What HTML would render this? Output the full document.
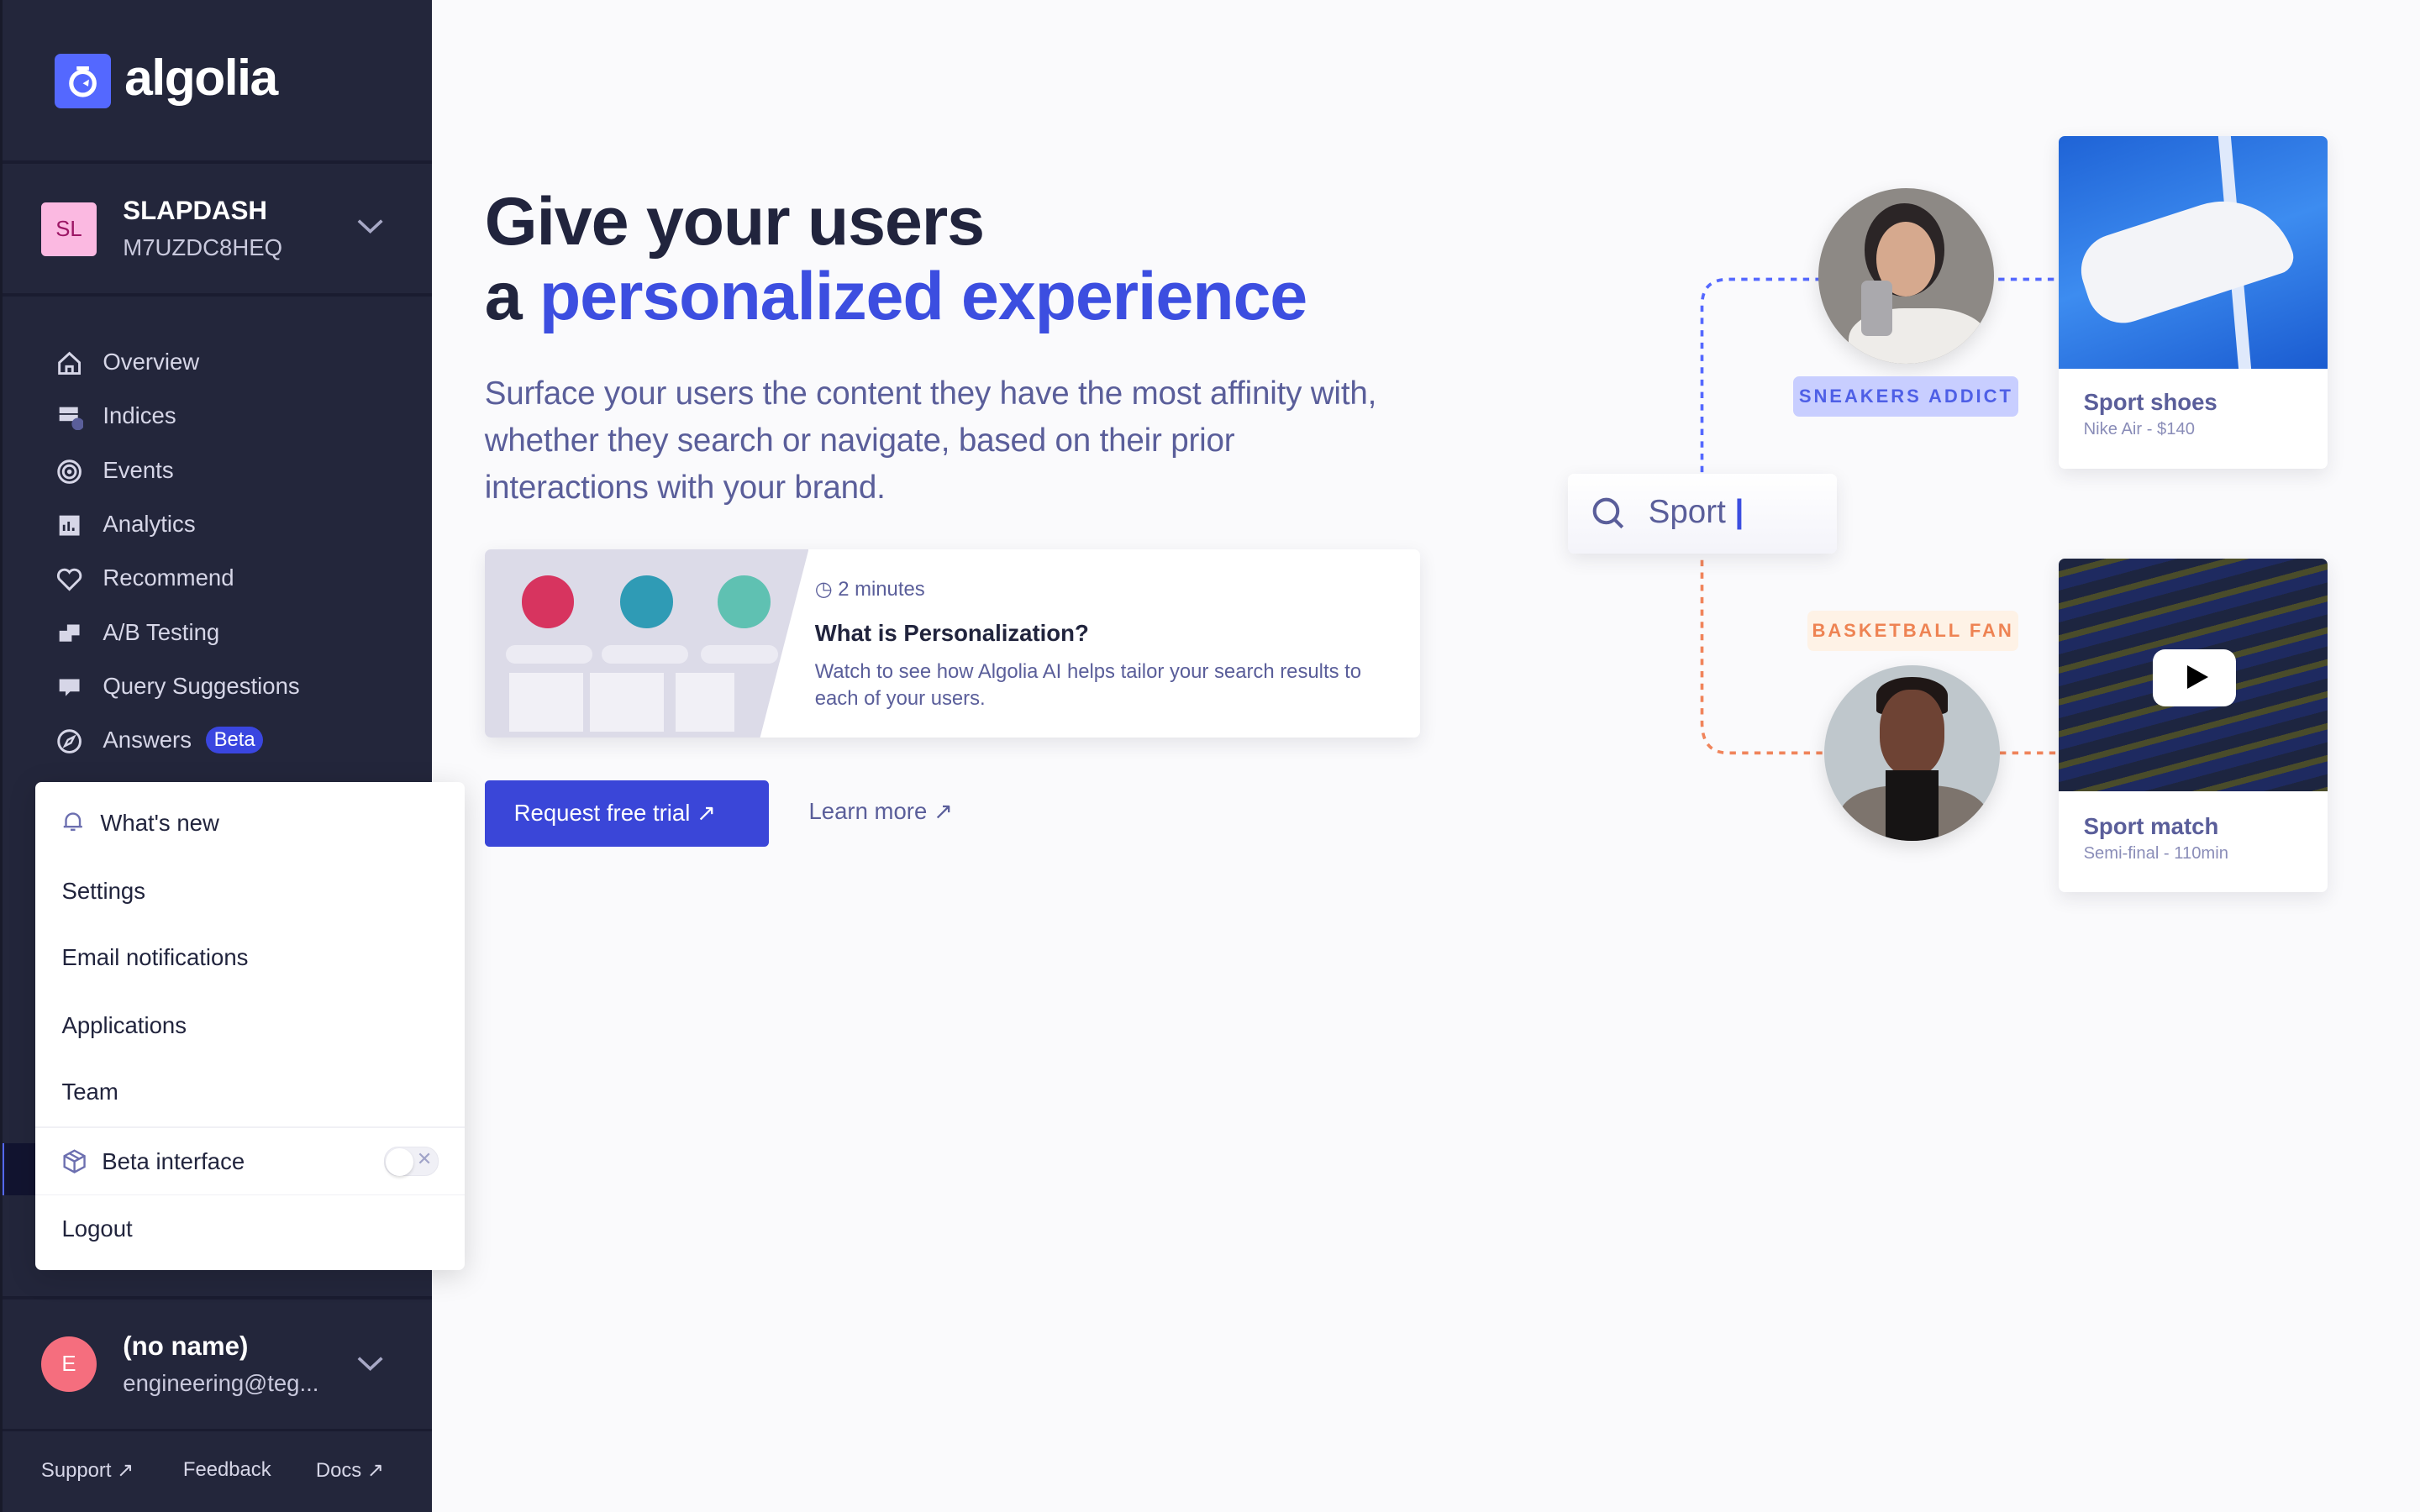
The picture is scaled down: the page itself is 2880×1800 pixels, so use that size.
<!DOCTYPE html>
<html><head><meta charset="utf-8"><style>
html,body{margin:0;padding:0}
body{width:1568px;height:980px;zoom:1.83673;background:#fafafc;font-family:"Liberation Sans",sans-serif;position:relative;overflow:hidden}
.abs{position:absolute}
#sb{left:0;top:0;width:280px;height:980px;background:#23263b;border-left:2px solid #181a2a;box-sizing:border-box;overflow:hidden}
.hr{position:absolute;left:0;width:278px;height:2px;background:#1a1c30}
.nav{position:absolute;left:65px;color:#d6d6e7;font-size:15px}
.ic{position:absolute;left:35px;width:17px;height:17px}
.menu{left:23px;top:507px;width:278px;height:316px;background:#fff;border-radius:4px;box-shadow:0 4px 18px rgba(0,0,0,.15)}
.mi{position:absolute;left:17px;font-size:15px;color:#21243d}
h1{margin:0;font-size:44px;line-height:48px;color:#21243d;font-weight:700;letter-spacing:-0.6px}
.card{background:#fff;border-radius:4px;box-shadow:0 4px 12px rgba(35,38,59,.1)}
</style></head><body>
<div id="sb" class="abs">
 <div class="abs" style="left:34px;top:35px;width:36px;height:35px;background:#5468ff;border-radius:4px"></div>
 <svg class="abs" style="left:37px;top:37px" width="30" height="30" viewBox="0 0 30 30"><circle cx="15" cy="17" r="7.5" fill="none" stroke="#fff" stroke-width="2.8"/><rect x="11" y="6" width="8" height="2.5" fill="#fff"/><path d="M15 17 L19 14.5 L18.5 19Z" fill="#fff"/></svg>
 <div class="abs" style="left:79px;top:31px;font-size:33px;color:#fff;font-weight:700;letter-spacing:-0.8px">algolia</div>
 <div class="hr" style="top:104px"></div>
 <div class="abs" style="left:25px;top:131px;width:36px;height:35px;background:#fbb9e1;border-radius:3px;color:#9c1665;font-size:14px;text-align:center;line-height:35px">SL</div>
 <div class="abs" style="left:78px;top:127px;color:#fff;font-size:17px;font-weight:700">SLAPDASH</div>
 <div class="abs" style="left:78px;top:152px;color:#c9c9dd;font-size:15px">M7UZDC8HEQ</div>
 <svg class="abs" style="left:230px;top:141px" width="17" height="12"><path d="M1 2 L8.5 9 L16 2" stroke="#a7a8c6" stroke-width="2" fill="none"/></svg>
 <div class="hr" style="top:190px"></div>
 <svg class="ic" style="top:227px" viewBox="0 0 17 17"><path d="M2 8 L8.5 2 L15 8 V15 H2Z M6.5 15 V10.5 H10.5 V15" fill="none" stroke="#d6d6e7" stroke-width="1.6"/></svg>
 <div class="nav" style="top:226px">Overview</div>
 <svg class="ic" style="top:262px" viewBox="0 0 17 17"><rect x="2" y="2" width="12" height="4" fill="#d6d6e7"/><rect x="2" y="7" width="12" height="4" fill="#d6d6e7"/><circle cx="14" cy="13" r="4" fill="#5a5e9a"/></svg>
 <div class="nav" style="top:261px">Indices</div>
 <svg class="ic" style="top:297px" viewBox="0 0 17 17"><circle cx="8.5" cy="8.5" r="7" fill="none" stroke="#d6d6e7" stroke-width="1.6"/><circle cx="8.5" cy="8.5" r="4" fill="none" stroke="#d6d6e7" stroke-width="1.6"/><circle cx="8.5" cy="8.5" r="1.5" fill="#d6d6e7"/></svg>
 <div class="nav" style="top:296px">Events</div>
 <svg class="ic" style="top:332px" viewBox="0 0 17 17"><rect x="2" y="2" width="13" height="13" fill="#d6d6e7"/><path d="M5 12V8M8 12V6M11 12V10" stroke="#23263b" stroke-width="1.5"/></svg>
 <div class="nav" style="top:331px">Analytics</div>
 <svg class="ic" style="top:367px" viewBox="0 0 17 17"><path d="M8.5 15 L2 8.5 A3.5 3.5 0 0 1 8.5 4 A3.5 3.5 0 0 1 15 8.5Z" fill="none" stroke="#d6d6e7" stroke-width="1.6"/></svg>
 <div class="nav" style="top:366px">Recommend</div>
 <svg class="ic" style="top:402px" viewBox="0 0 17 17"><rect x="2" y="7" width="8" height="7" fill="#d6d6e7"/><rect x="7" y="3" width="8" height="7" fill="#d6d6e7"/></svg>
 <div class="nav" style="top:401px">A/B Testing</div>
 <svg class="ic" style="top:437px" viewBox="0 0 17 17"><path d="M2 3H15V11H9L6 14V11H2Z" fill="#d6d6e7"/></svg>
 <div class="nav" style="top:436px">Query Suggestions</div>
 <svg class="ic" style="top:472px" viewBox="0 0 17 17"><circle cx="8.5" cy="8.5" r="7" fill="none" stroke="#d6d6e7" stroke-width="1.6"/><path d="M11.5 5.5 L9.5 9.5 L5.5 11.5 L7.5 7.5Z" fill="none" stroke="#d6d6e7" stroke-width="1.3"/></svg>
 <div class="nav" style="top:471px">Answers</div>
 <div class="abs" style="left:132px;top:471px;background:#3a46e0;color:#fff;font-size:13px;padding:1px 5px;border-radius:9px">Beta</div>
 <div class="abs" style="left:-2px;top:741px;width:3px;height:34px;background:#5468ff"></div>
 <div class="abs" style="left:1px;top:741px;width:20px;height:34px;background:#121430"></div>
 <div class="hr" style="top:840px"></div>
 <div class="abs" style="left:25px;top:866px;width:36px;height:36px;background:#f56e7e;border-radius:50%;color:#fff;font-size:14px;text-align:center;line-height:36px">E</div>
 <div class="abs" style="left:78px;top:863px;color:#fff;font-size:17px;font-weight:700">(no name)</div>
 <div class="abs" style="left:78px;top:888px;color:#c9c9dd;font-size:15px">engineering@teg...</div>
 <svg class="abs" style="left:230px;top:878px" width="17" height="12"><path d="M1 2 L8.5 9 L16 2" stroke="#a7a8c6" stroke-width="2" fill="none"/></svg>
 <div class="hr" style="top:926px"></div>
 <div class="abs" style="left:25px;top:945px;color:#d6d6e7;font-size:13px">Support ↗</div>
 <div class="abs" style="left:117px;top:945px;color:#d6d6e7;font-size:13px">Feedback</div>
 <div class="abs" style="left:203px;top:945px;color:#d6d6e7;font-size:13px">Docs ↗</div>
</div>
<div class="abs menu">
 <svg class="abs" style="left:17px;top:18px" width="15" height="15" viewBox="0 0 15 15"><path d="M3 11V7A4.5 4.5 0 0 1 12 7V11H3ZM1.5 11H13.5M6 13H9" fill="none" stroke="#6c6fb0" stroke-width="1.3"/></svg>
 <div class="mi" style="left:42px;top:18px">What's new</div>
 <div class="mi" style="top:62px">Settings</div>
 <div class="mi" style="top:105px">Email notifications</div>
 <div class="mi" style="top:149px">Applications</div>
 <div class="mi" style="top:192px">Team</div>
 <div class="abs" style="left:0;top:223px;width:278px;height:1px;background:#f0f0f5"></div>
 <svg class="abs" style="left:17px;top:237px" width="17" height="17" viewBox="0 0 17 17"><path d="M8.5 1.5L15 5V12L8.5 15.5L2 12V5Z M2 5L8.5 8.5L15 5 M8.5 8.5V15.5 M5 3.2L11.5 6.8" fill="none" stroke="#6c6fb0" stroke-width="1.3"/></svg>
 <div class="mi" style="left:43px;top:237px">Beta interface</div>
 <div class="abs" style="left:226px;top:236px;width:34px;height:18px;border-radius:9px;background:#f0f0f6;border:1px solid #e6e6ee"></div>
 <div class="abs" style="left:227px;top:237px;width:18px;height:18px;border-radius:50%;background:#fff;box-shadow:0 1px 2px rgba(0,0,0,.15)"></div>
 <div class="abs" style="left:247px;top:237px;color:#a0a3c8;font-size:12px">✕</div>
 <div class="abs" style="left:0;top:267px;width:278px;height:1px;background:#f0f0f5"></div>
 <div class="mi" style="top:281px">Logout</div>
</div>

<div class="abs" style="left:314px;top:120px"><h1>Give your users</h1><h1>a <span style="color:#3c4ee0">personalized experience</span></h1></div>
<div class="abs" style="left:314px;top:240px;width:585px;font-size:21px;line-height:30.5px;color:#5a5e9a;letter-spacing:-0.1px">Surface your users the content they have the most affinity with, whether they search or navigate, based on their prior interactions with your brand.</div>

<div class="abs card" style="left:314px;top:356px;width:606px;height:122px;overflow:hidden">
 <div class="abs" style="left:0;top:0;width:210px;height:122px;background:#dcdbe8;clip-path:polygon(0 0,100% 0,85% 100%,0 100%)"></div>
 <div class="abs" style="left:24px;top:17px;width:34px;height:34px;border-radius:50%;background:#d7345f"></div>
 <div class="abs" style="left:88px;top:17px;width:34px;height:34px;border-radius:50%;background:#2f9bb5"></div>
 <div class="abs" style="left:151px;top:17px;width:34px;height:34px;border-radius:50%;background:#5fc1b2"></div>
 <div class="abs" style="left:14px;top:62px;width:56px;height:12px;border-radius:6px;background:#ecebf3"></div>
 <div class="abs" style="left:76px;top:62px;width:56px;height:12px;border-radius:6px;background:#ecebf3"></div>
 <div class="abs" style="left:140px;top:62px;width:50px;height:12px;border-radius:6px;background:#ecebf3"></div>
 <div class="abs" style="left:16px;top:80px;width:48px;height:38px;background:#f1f0f6"></div>
 <div class="abs" style="left:68px;top:80px;width:48px;height:38px;background:#f1f0f6"></div>
 <div class="abs" style="left:124px;top:80px;width:38px;height:38px;background:#f1f0f6"></div>
 <div class="abs" style="left:214px;top:18px;font-size:13px;color:#5a5e9a">◷ 2 minutes</div>
 <div class="abs" style="left:214px;top:46px;font-size:15px;color:#21243d;font-weight:700">What is Personalization?</div>
 <div class="abs" style="left:214px;top:71px;width:370px;font-size:13px;line-height:17.5px;color:#5a5e9a">Watch to see how Algolia AI helps tailor your search results to each of your users.</div>
</div>

<div class="abs" style="left:314px;top:506px;width:184px;height:43px;background:#3a46d8;border-radius:3px;color:#fff;font-size:15px;line-height:43px;text-indent:19px">Request free trial ↗</div>
<div class="abs" style="left:524px;top:517px;color:#5a5e9a;font-size:15px">Learn more ↗</div>

<svg class="abs" style="left:1100px;top:178px" width="240" height="315"><path d="M3 128 V20 Q3 3 20 3 H80" stroke="#5468ff" stroke-width="2" stroke-dasharray="4 4" fill="none"/><path d="M195 3 H235" stroke="#5468ff" stroke-width="2" stroke-dasharray="4 4"/><path d="M3 185 V290 Q3 310 20 310 H82" stroke="#f0845b" stroke-width="2" stroke-dasharray="4 4" fill="none"/><path d="M196 310 H235" stroke="#f0845b" stroke-width="2" stroke-dasharray="4 4"/></svg>
<div class="abs" style="left:1178px;top:122px;width:114px;height:114px;border-radius:50%;overflow:hidden;background:#8d8985;box-shadow:0 4px 12px rgba(0,0,0,.12)">
 <div class="abs" style="left:30px;top:10px;width:52px;height:60px;border-radius:50%;background:#2b2526"></div>
 <div class="abs" style="left:38px;top:22px;width:38px;height:48px;border-radius:50%;background:#d6a98e"></div>
 <div class="abs" style="left:20px;top:78px;width:90px;height:50px;border-radius:40% 40% 0 0;background:#eeece9"></div>
 <div class="abs" style="left:28px;top:60px;width:20px;height:36px;border-radius:4px;background:#aaa9ad"></div>
</div>
<div class="abs" style="left:1162px;top:244px;width:146px;height:26px;background:#c8ceff;border-radius:4px;color:#4e5fe6;font-size:12px;font-weight:700;letter-spacing:1.6px;text-align:center;line-height:26px">SNEAKERS ADDICT</div>
<div class="abs" style="left:1171px;top:396px;width:137px;height:26px;background:#fef2e6;border-radius:4px;color:#ee8353;font-size:12px;font-weight:700;letter-spacing:1.6px;text-align:center;line-height:26px">BASKETBALL FAN</div>
<div class="abs" style="left:1182px;top:431px;width:114px;height:114px;border-radius:50%;overflow:hidden;background:#bfc7cc;box-shadow:0 4px 12px rgba(0,0,0,.12)">
 <div class="abs" style="left:34px;top:8px;width:46px;height:24px;border-radius:50% 50% 10% 10%;background:#1f1716"></div>
 <div class="abs" style="left:36px;top:16px;width:42px;height:56px;border-radius:45%;background:#6e4334"></div>
 <div class="abs" style="left:10px;top:78px;width:96px;height:50px;border-radius:40% 40% 0 0;background:#7d746d"></div>
 <div class="abs" style="left:40px;top:68px;width:34px;height:50px;background:#161414"></div>
</div>

<div class="abs card" style="left:1016px;top:307px;width:174px;height:52px;background:linear-gradient(#fff,#f4f4fa)">
 <svg class="abs" style="left:15px;top:15px" width="22" height="22"><circle cx="9.5" cy="9.5" r="7.5" stroke="#5a5e9a" stroke-width="2.2" fill="none"/><path d="M15 15L20 20" stroke="#5a5e9a" stroke-width="2.2"/></svg>
 <div class="abs" style="left:52px;top:13px;font-size:21px;color:#5a5e9a">Sport <span style="color:#3c4ee0;font-weight:700">|</span></div>
</div>

<div class="abs card" style="left:1334px;top:88px;width:174px;height:216px;overflow:hidden">
 <div class="abs" style="left:0;top:0;width:174px;height:151px;background:linear-gradient(160deg,#1f63d6,#3d8cf0 50%,#1a5bd0)"></div>
 <div class="abs" style="left:110px;top:0;width:8px;height:151px;background:#dfe9fb;transform:skewX(5deg)"></div>
 <div class="abs" style="left:14px;top:50px;width:135px;height:58px;background:#f3f4f8;border-radius:30px 60px 14px 30px;transform:rotate(-18deg)"></div>
 <div class="abs" style="left:16px;top:164px;color:#5a5e9a;font-size:15px;font-weight:700">Sport shoes</div>
 <div class="abs" style="left:16px;top:184px;color:#8a8db8;font-size:11px">Nike Air - $140</div>
</div>
<div class="abs card" style="left:1334px;top:362px;width:174px;height:216px;overflow:hidden">
 <div class="abs" style="left:0;top:0;width:174px;height:151px;background:repeating-linear-gradient(165deg,#1d2540 0 8px,#4a4c2a 8px 12px,#1e2a60 12px 20px)"></div>
 <div class="abs" style="left:61px;top:59px;width:54px;height:37px;background:#fff;border-radius:8px"></div>
 <div class="abs" style="left:83px;top:69px;width:0;height:0;border-left:14px solid #000;border-top:8px solid transparent;border-bottom:8px solid transparent"></div>
 <div class="abs" style="left:16px;top:165px;color:#5a5e9a;font-size:15px;font-weight:700">Sport match</div>
 <div class="abs" style="left:16px;top:185px;color:#8a8db8;font-size:11px">Semi-final - 110min</div>
</div>
</body></html>
